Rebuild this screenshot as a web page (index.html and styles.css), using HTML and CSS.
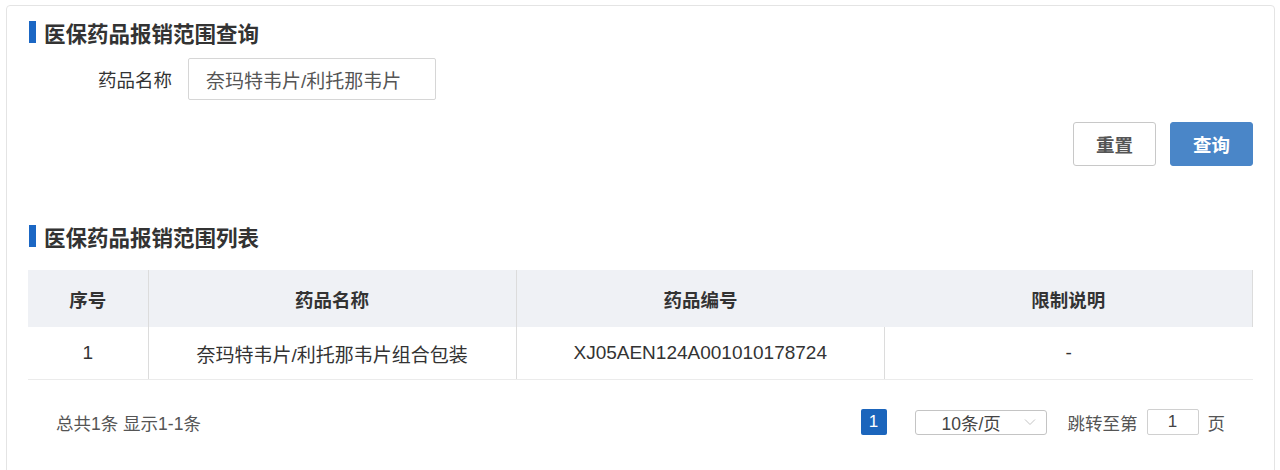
FILE: index.html
```html
<!DOCTYPE html>
<html lang="zh-CN">
  <head>
    <meta charset="UTF-8" />
    <title>医保药品报销范围查询</title>
    <link rel="stylesheet" href="styles.css">
  </head>
  <body>
    <div class="card">
      <!-- 查询条件 -->
      <div class="section-title"><span class="bar"></span>医保药品报销范围查询</div>
      <div class="form-row">
        <label class="form-label" for="drugName">药品名称</label>
        <input type="text" id="drugName" class="form-input" value="奈玛特韦片/利托那韦片" />
      </div>
      <div class="actions">
        <button class="btn btn-default">重置</button>
        <button class="btn btn-primary">查询</button>
      </div>

      <!-- 查询结果 -->
      <div class="section-title list-title"><span class="bar"></span>医保药品报销范围列表</div>
      <table class="result-table">
        <colgroup>
          <col class="col-no" />
          <col />
          <col />
          <col />
        </colgroup>
        <thead>
          <tr>
            <th class="sep">序号</th>
            <th class="sep">药品名称</th>
            <th>药品编号</th>
            <th class="sep">限制说明</th>
          </tr>
        </thead>
        <tbody>
          <tr>
            <td class="sep">1</td>
            <td class="sep">奈玛特韦片/利托那韦片组合包装</td>
            <td class="sep">XJ05AEN124A001010178724</td>
            <td>-</td>
          </tr>
        </tbody>
      </table>

      <div class="pager">
        <div class="pager-total">总共1条 显示1-1条</div>
        <div class="pager-right">
          <span class="page-num active">1</span>
          <div class="page-size">
            <span>10条/页</span>
            <svg class="chevron" width="12" height="8" viewBox="0 0 12 8">
              <path d="M1 1.5 L6 6.5 L11 1.5" fill="none" stroke="#c4c4c4" stroke-width="1" />
            </svg>
          </div>
          <span class="jump-text">跳转至第</span>
          <input type="text" class="jump-input" value="1" />
          <span class="jump-text">页</span>
        </div>
      </div>
    </div>
  </body>
</html>
```

FILE: styles.css
```css
body {
  margin: 0;
  padding: 5px 5px 0 6px;
  height: 100vh;
  box-sizing: border-box;
  overflow: hidden;
  background: #fff;
  font-family: "Liberation Sans", "Noto Sans CJK SC", sans-serif;
  color: #333;
}

.card {
  border: 1px solid #e4e4e4;
  border-radius: 4px;
  padding: 14px 21px 0 21px;
  min-height: 480px;
}

.section-title {
  display: flex;
  align-items: center;
  height: 24px;
  font-size: 21.5px;
  font-weight: bold;
  color: #333;
}

.section-title .bar {
  width: 7px;
  height: 22px;
  background: #1b67c4;
  margin: 0 8px 0 1px;
}

.list-title {
  margin-top: 58px;
}

.form-row {
  display: flex;
  align-items: center;
  margin-top: 14px;
}

.form-label {
  width: 144px;
  text-align: right;
  font-size: 18.5px;
  color: #333;
  margin-right: 16px;
}

.form-input {
  width: 248px;
  height: 42px;
  box-sizing: border-box;
  border: 1px solid #d6d6d6;
  border-radius: 2px;
  padding: 0 17px;
  font-family: inherit;
  font-size: 19px;
  color: #555;
}

.actions {
  display: flex;
  justify-content: flex-end;
  gap: 14px;
  margin-top: 22px;
}

.btn {
  width: 83px;
  height: 44px;
  border-radius: 3px;
  font-family: inherit;
  font-size: 18.5px;
  font-weight: bold;
  cursor: pointer;
}

.btn-default {
  background: #fff;
  border: 1px solid #c8c8c8;
  color: #555;
}

.btn-primary {
  background: #4a86c8;
  border: 1px solid #4a86c8;
  color: #fff;
}

.result-table {
  width: 100%;
  margin-top: 22px;
  border-collapse: collapse;
  table-layout: fixed;
  font-size: 19px;
}

.col-no {
  width: 120px;
}

.result-table th {
  height: 57px;
  background: #eff1f5;
  font-size: 18.5px;
  font-weight: bold;
  color: #333;
  padding: 0;
}

.result-table td {
  height: 52px;
  text-align: center;
  color: #333;
  border-bottom: 1px solid #ebebeb;
  padding: 0;
}

.result-table .sep {
  border-right: 1px solid #dcdcdc;
}

.pager {
  display: flex;
  justify-content: space-between;
  align-items: center;
  padding: 29px 28px 0 28px;
  font-size: 17.5px;
  color: #555;
}

.pager-right {
  display: flex;
  align-items: center;
}

.page-num {
  width: 26px;
  height: 26px;
  line-height: 26px;
  text-align: center;
  border-radius: 2px;
  font-size: 17px;
}

.page-num.active {
  background: #1b65bc;
  color: #fff;
}

.page-size {
  display: flex;
  align-items: center;
  justify-content: space-between;
  width: 132px;
  height: 25px;
  box-sizing: border-box;
  border: 1px solid #c4c4c4;
  border-radius: 3px;
  margin-left: 28px;
  padding: 0 10px 0 26px;
  color: #444;
}

.jump-text {
  color: #555;
}

.page-size + .jump-text {
  margin-left: 21px;
}

.jump-input {
  width: 52px;
  height: 26px;
  box-sizing: border-box;
  border: 1px solid #d0d0d0;
  border-radius: 2px;
  margin: 0 9px;
  text-align: center;
  font-family: inherit;
  font-size: 17px;
  color: #444;
}
```
